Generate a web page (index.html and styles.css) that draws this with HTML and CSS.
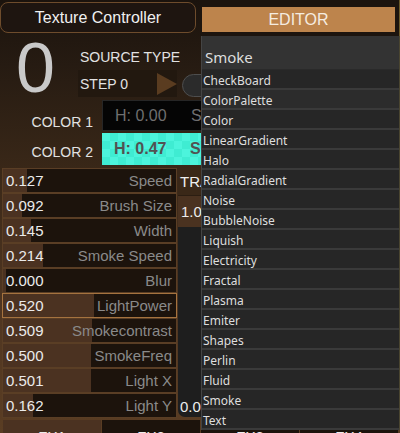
FILE: index.html
```html
<!DOCTYPE html>
<html>
<head>
<meta charset="utf-8">
<link rel="stylesheet" href="styles.css">
</head>
<body>
<div class="app">
  <div class="topbar">
    <div class="title-btn">Texture Controller</div>
    <div class="editor-area"><div class="editor-btn">EDITOR</div></div>
  </div>
  <div class="main">
    <div class="top-row">
      <div class="zero">0</div>
      <div class="src">
        <div class="src-title">SOURCE TYPE</div>
        <div class="step-row">
          <div class="step">
            <span class="step-label">STEP 0</span>
            <svg class="play" width="20" height="24" viewBox="0 0 20 24"><polygon points="0,1 20,12 0,23" fill="#5a3c20"/></svg>
          </div>
          <div class="pill"></div>
        </div>
      </div>
    </div>
    <div class="color-row r1">
      <div class="color-label">COLOR 1</div>
      <div class="color-box c1"><span>H: 0.00</span><span>S: 0.00</span></div>
    </div>
    <div class="color-row r2">
      <div class="color-label">COLOR 2</div>
      <div class="color-box c2"><span>H: 0.47</span><span>S: 0.72</span></div>
    </div>
    <div class="sliders">
      <div class="slider-col">
        <div class="slider" style="--fill:24px"><span class="val">0.127</span><span class="lab">Speed</span></div>
        <div class="slider" style="--fill:19px"><span class="val">0.092</span><span class="lab">Brush Size</span></div>
        <div class="slider" style="--fill:28px"><span class="val">0.145</span><span class="lab">Width</span></div>
        <div class="slider" style="--fill:40px"><span class="val">0.214</span><span class="lab">Smoke Speed</span></div>
        <div class="slider" style="--fill:3px"><span class="val">0.000</span><span class="lab">Blur</span></div>
        <div class="slider active" style="--fill:91px"><span class="val">0.520</span><span class="lab">LightPower</span></div>
        <div class="slider" style="--fill:89px"><span class="val">0.509</span><span class="lab">Smokecontrast</span></div>
        <div class="slider" style="--fill:88px"><span class="val">0.500</span><span class="lab">SmokeFreq</span></div>
        <div class="slider" style="--fill:88px"><span class="val">0.501</span><span class="lab">Light X</span></div>
        <div class="slider" style="--fill:30px"><span class="val">0.162</span><span class="lab">Light Y</span></div>
      </div>
      <div class="side-col">
        <div class="tra">TRANSFORM</div>
        <div class="one">1.00</div>
        <div class="dark">0.00</div>
      </div>
    </div>
  </div>
  <div class="tabs">
    <div class="tab on">FX1</div>
    <div class="tab">FX2</div>
    <div class="tab">FX3</div>
    <div class="tab">FX4</div>
  </div>
  <div class="dropdown">
    <div class="dd-head">Smoke</div>
    <div class="dd-item">CheckBoard</div>
    <div class="dd-item hover">ColorPalette</div>
    <div class="dd-item">Color</div>
    <div class="dd-item">LinearGradient</div>
    <div class="dd-item">Halo</div>
    <div class="dd-item">RadialGradient</div>
    <div class="dd-item">Noise</div>
    <div class="dd-item">BubbleNoise</div>
    <div class="dd-item">Liquish</div>
    <div class="dd-item">Electricity</div>
    <div class="dd-item">Fractal</div>
    <div class="dd-item">Plasma</div>
    <div class="dd-item">Emiter</div>
    <div class="dd-item">Shapes</div>
    <div class="dd-item">Perlin</div>
    <div class="dd-item">Fluid</div>
    <div class="dd-item">Smoke</div>
    <div class="dd-item">Text</div>
  </div>
</div>
</body>
</html>
```
FILE: styles.css
```css
html, body {
  margin: 0;
  padding: 0;
}
body {
  width: 400px;
  height: 433px;
  overflow: hidden;
  background: linear-gradient(to bottom, #1b130d 0%, #261b12 15%, #3a2818 40%, #4e3521 70%, #5a3d23 100%);
  font-family: "Liberation Sans", Arial, sans-serif;
  color: #e8e8e8;
}
.app {
  position: relative;
  width: 400px;
  height: 433px;
  overflow: hidden;
  display: flex;
  flex-direction: column;
}
.topbar {
  display: flex;
  height: 36px;
  flex: none;
}
.title-btn {
  width: 196px;
  height: 31px;
  margin-top: 2px;
  box-sizing: border-box;
  border: 1px solid #6e4c2c;
  border-radius: 8px;
  background: #1e1510;
  display: flex;
  align-items: center;
  justify-content: center;
  font-size: 16px;
  color: #f0f0f0;
  flex: none;
}
.editor-area {
  margin-left: 4px;
  width: 200px;
  box-sizing: border-box;
  background: #1c140e;
  padding: 7px 4px 0 2px;
  border-right: 1px solid #6b5a2a;
  flex: none;
}
.editor-btn {
  height: 25px;
  background: #bd844c;
  color: #f5ece0;
  font-size: 16px;
  display: flex;
  align-items: center;
  justify-content: center;
}
.main {
  width: 212px;
  display: flex;
  flex-direction: column;
  flex: none;
}
.top-row {
  display: flex;
  height: 61px;
}
.zero {
  width: 78px;
  flex: none;
  box-sizing: border-box;
  padding-left: 16px;
  padding-top: 3px;
  font-size: 70px;
  line-height: 58px;
  color: #c9c9c9;
}
.src {
  display: flex;
  flex-direction: column;
  flex: none;
}
.src-title {
  height: 26px;
  padding-top: 8px;
  padding-left: 2px;
  line-height: 26px;
  font-size: 14px;
  color: #e2e2e2;
}
.step-row {
  display: flex;
  height: 27px;
}
.step {
  width: 99px;
  height: 27px;
  flex: none;
  box-sizing: border-box;
  padding-left: 2px;
  background: #22180f;
  display: flex;
  justify-content: space-between;
  align-items: center;
}
.step-label {
  font-size: 14px;
  line-height: 25px;
  padding-top: 2px;
  color: #e2e2e2;
}
.play {
  display: block;
  flex: none;
}
.pill {
  margin-left: 5px;
  margin-top: 4px;
  width: 60px;
  height: 23px;
  flex: none;
  box-sizing: border-box;
  border-radius: 12px;
  background: #2b2b2b;
  border: 1px solid #4e4e4e;
}
.color-row {
  display: flex;
}
.color-row.r1 {
  margin-top: 3px;
  height: 31px;
}
.color-row.r2 {
  margin-top: 2px;
  height: 32px;
}
.color-label {
  width: 102px;
  flex: none;
  box-sizing: border-box;
  text-align: right;
  padding-right: 9px;
  font-size: 14px;
  line-height: 17px;
  align-self: flex-end;
  color: #e2e2e2;
}
.r2 .color-label {
  padding-bottom: 4px;
}
.color-box {
  width: 110px;
  flex: none;
  box-sizing: border-box;
  display: flex;
  align-items: center;
  padding-left: 12px;
  font-size: 16px;
}
.color-box span {
  width: 76px;
  flex: none;
}
.c1 {
  background: #050505;
  color: #6f6f6f;
  border: 1px solid #262626;
}
.c2 {
  background: repeating-conic-gradient(#3fecd2 0 25%, #4cf4dc 0 50%) 0 0 / 16px 16px;
  color: #525252;
  font-weight: bold;
}
.sliders {
  display: flex;
  margin-top: 3px;
}
.slider-col {
  width: 175px;
  flex: none;
  margin-left: 2px;
  display: flex;
  flex-direction: column;
}
.slider {
  height: 25px;
  box-sizing: border-box;
  border: 1px solid #5a3e25;
  background: linear-gradient(90deg, #4b3221 var(--fill), #1c130c var(--fill));
  display: flex;
  justify-content: space-between;
  align-items: center;
  padding: 0 4px 0 3px;
  font-size: 15px;
  line-height: 23px;
}
.slider.active {
  border-color: #a5733f;
}
.val {
  color: #ebebeb;
}
.lab {
  color: #8a8a8a;
}
.side-col {
  width: 34px;
  flex: none;
  margin-left: 1px;
  display: flex;
  flex-direction: column;
  font-size: 15px;
  overflow: hidden;
  white-space: nowrap;
}
.tra {
  height: 27px;
  line-height: 27px;
  padding-left: 2px;
  background: #3a2818;
  color: #f0f0f0;
  border-bottom: 1px solid #2c1e12;
}
.one {
  height: 31px;
  line-height: 31px;
  padding-left: 3px;
  background: #4a3220;
  color: #ececec;
}
.dark {
  flex: 1;
  margin-bottom: 1px;
  background: #1e1e1e;
  border-radius: 0 0 0 7px;
  display: flex;
  align-items: flex-end;
  padding-left: 2px;
  padding-bottom: 2px;
  line-height: 17px;
  color: #ececec;
}
.tabs {
  display: flex;
  gap: 1px;
  height: 25px;
  margin-top: 2px;
  padding-left: 3px;
  flex: none;
}
.tab {
  width: 98px;
  flex: none;
  background: #1c130c;
  text-align: center;
  font-size: 15px;
  line-height: 25px;
  padding-top: 4px;
  box-sizing: border-box;
  color: #ececec;
}
.tab.on {
  background: #4b3221;
}
.dropdown {
  position: absolute;
  top: 36px;
  left: 201px;
  width: 199px;
  box-sizing: border-box;
  border-left: 1px solid #444444;
  border-right: 1px solid #4a4530;
  font-family: "Noto Sans", "Open Sans", sans-serif;
  color: #dedede;
  background: #262626;
}
.dd-head {
  height: 34px;
  box-sizing: border-box;
  padding-top: 9px;
  padding-left: 3px;
  line-height: 25px;
  font-size: 15px;
  background: #333333;
  border-bottom: 1px solid #2a2a2a;
}
.dd-item {
  height: 20px;
  box-sizing: border-box;
  border-bottom: 2px solid #3a3a3a;
  padding-top: 2px;
  line-height: 18px;
  font-size: 12px;
  padding-left: 1px;
  background: #262626;
}
.dd-item.hover {
  background: #2c2c2c;
}
```
